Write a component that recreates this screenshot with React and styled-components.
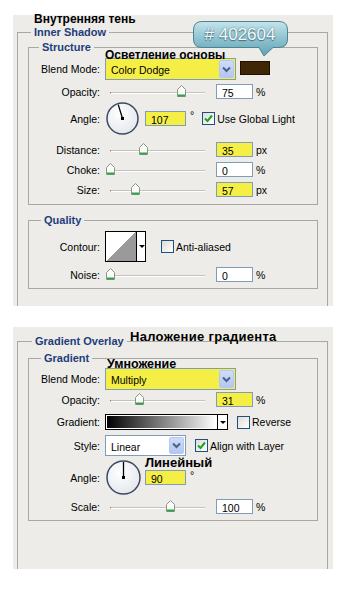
import React from "react"
import styled, { createGlobalStyle, css } from "styled-components"

const GlobalStyle = createGlobalStyle`
  body {
    margin: 0;
    background: #fff;
    font-family: "Liberation Sans", Arial, sans-serif;
  }
`

const YELLOW = "#f5ef45"

const Page = styled.div`
  padding: 15px 0 0 13px;
`

const Panel = styled.div`
  display: flow-root;
  position: relative;
  width: 320px;
  height: ${(p) => p.$h}px;
  margin-top: ${(p) => p.$mt || 0}px;
  background: #edece8;
`

/* outer group runs past the bottom of the cropped panel, so it has no bottom edge */
const OuterSet = styled.fieldset`
  box-sizing: border-box;
  width: 311px;
  height: ${(p) => p.$h}px;
  margin: ${(p) => p.$mt}px 0 0 4px;
  padding: ${(p) => p.$pt}px 9px 0 10px;
  border: 1px solid #a9a8a2;
  border-bottom: none;
`

const InnerSet = styled.fieldset`
  box-sizing: border-box;
  width: 290px;
  margin: ${(p) => p.$mt || 0}px 0 0 0;
  padding: ${(p) => p.$pt}px 0 ${(p) => p.$pb}px 0;
  border: 1px solid #a9a8a2;
`

const Legend = styled.legend`
  font: bold 11px/${(p) => p.$lh || 13}px "Liberation Sans", Arial, sans-serif;
  color: #1e3d7b;
  padding: 0 3px;
  margin-left: ${(p) => p.$ml}px;
`

const Row = styled.div`
  display: flex;
  align-items: center;
  height: ${(p) => p.$h}px;
  margin-top: ${(p) => p.$mt || 0}px;
`

const Label = styled.div`
  width: 71px;
  flex: none;
  text-align: right;
  font-size: 10.5px;
  color: #000;
  margin-right: 5px;
`

const Unit = styled.span`
  font-size: 10.5px;
  color: #000;
  margin-left: ${(p) => p.$ml || 3}px;
  ${(p) =>
    p.$top &&
    css`
      align-self: flex-start;
      margin-top: ${p.$top}px;
    `}
`

const Field = styled.div`
  box-sizing: border-box;
  width: ${(p) => p.$w || 37}px;
  height: 15px;
  border: 1px solid #7f9db9;
  background: ${(p) => (p.$hl ? YELLOW : "#fff")};
  font-size: 10.5px;
  line-height: 14px;
  padding: 1px 0 0 5px;
  margin-left: ${(p) => p.$ml || 0}px;
`

const Select = styled.div`
  box-sizing: border-box;
  display: flex;
  align-items: center;
  width: ${(p) => p.$w}px;
  height: ${(p) => p.$h}px;
  border: 1px solid #7f9db9;
  background: ${(p) => (p.$hl ? YELLOW : "#fff")};
  padding: 1px;
  font-size: 10.5px;
`

const SelectText = styled.span`
  flex: 1;
  padding-left: 4px;
  padding-top: 2px;
`

const DropButton = styled.div`
  width: 15px;
  align-self: stretch;
  border-radius: 2px;
  background: linear-gradient(#cfdcfb, #b3c6f2);
  border: 1px solid #b7c8ee;
  box-sizing: border-box;
  display: flex;
  align-items: center;
  justify-content: center;
`

const Swatch = styled.div`
  width: 30px;
  height: 14px;
  box-sizing: border-box;
  margin-left: 4px;
  margin-top: -2px;
  background: #402604;
  border: 1px solid #1b1002;
`

const SliderBox = styled.div`
  position: relative;
  width: 111px;
  height: 15px;
  flex: none;
`

const Track = styled.div`
  position: absolute;
  left: 5px;
  right: 11px;
  top: 8px;
  height: 1px;
  background: #c4c3bd;
  border-bottom: 1px solid #fff;
  border-left: 1px solid #888;
`

const Thumb = styled.svg`
  position: absolute;
  top: 1px;
  left: ${(p) => p.$x - 4.5}px;
`

const CheckBox = styled.div`
  box-sizing: border-box;
  width: 13px;
  height: 13px;
  flex: none;
  border: 1px solid #1c5180;
  background: linear-gradient(135deg, #dedcd4, #fff);
  margin-left: ${(p) => p.$ml}px;
  display: flex;
  align-items: center;
  justify-content: center;
`

const CheckText = styled.span`
  font-size: 10.5px;
  margin-left: 2px;
  white-space: nowrap;
`

const Dial = styled.svg`
  flex: none;
  margin-right: ${(p) => p.$mr}px;
`

const GradientBar = styled.div`
  box-sizing: border-box;
  display: flex;
  width: 123px;
  height: 16px;
  border: 1px solid #000;
  background: #fff;
`

const GradientFill = styled.div`
  flex: 1;
  margin: 1px;
  background: linear-gradient(to right, #000, #fff);
`

const MiniArrow = styled.div`
  width: 10px;
  flex: none;
  border-left: 1px solid #000;
  display: flex;
  justify-content: center;
  align-items: center;
  box-sizing: border-box;
  &::after {
    content: "";
    border-left: 3px solid transparent;
    border-right: 3px solid transparent;
    border-top: 3px solid #000;
  }
`

const ContourBox = styled.div`
  box-sizing: border-box;
  display: flex;
  width: 41px;
  height: 31px;
  border: 1px solid #000;
  background: #fff;
`

const ContourCurve = styled.div`
  width: 30px;
  flex: none;
  background: linear-gradient(to bottom right, #fff 50%, #9a9a9a 50%);
`

const Note = styled.div`
  position: absolute;
  left: ${(p) => p.$x}px;
  top: ${(p) => p.$y}px;
  font: bold ${(p) => p.$fs || 12}px / ${(p) => p.$lh || 12}px "Liberation Sans", Arial,
    sans-serif;
  letter-spacing: ${(p) => p.$ls || 0}px;
  color: #000;
  white-space: nowrap;
`

const Callout = styled.div`
  position: absolute;
  left: 180px;
  top: 6px;
  width: 96px;
  height: 36px;
`

const CalloutText = styled.div`
  position: absolute;
  left: 0;
  top: 4px;
  width: 94px;
  text-align: center;
  font: 17px/20px "Liberation Sans", Arial, sans-serif;
  color: #f4f8f9;
  text-shadow: 0 1px 1px #3f7080, 0 0 2px #4d8292;
`

const Chevron = () => (
  <svg width="9" height="7" viewBox="0 0 9 7">
    <path d="M1 1.5 L4.5 5 L8 1.5" fill="none" stroke="#4d6185" strokeWidth="2" />
  </svg>
)

const Check = ({ on }) =>
  on ? (
    <svg width="9" height="9" viewBox="0 0 9 9">
      <path d="M1 4.5 L3.5 7 L8 1.5" fill="none" stroke="#21a121" strokeWidth="2" />
    </svg>
  ) : null

const Slider = ({ x }) => (
  <SliderBox>
    <Track />
    <Thumb $x={x} width="9" height="12" viewBox="0 0 9 12">
      <path d="M0.5 4.5 L4.5 0.5 L8.5 4.5 V11.5 H0.5 Z" fill="#fbfbf8" stroke="#8a9488" />
      <rect x="1" y="9.5" width="7" height="2" fill="#2fa34a" />
    </Thumb>
  </SliderBox>
)

const AngleDial = ({ deg, size, mr }) => {
  const c = size / 2
  const r = c - 2
  const a = (deg * Math.PI) / 180
  return (
    <Dial $mr={mr} width={size} height={size} viewBox={`0 0 ${size} ${size}`}>
      <defs>
        <radialGradient id={`dg${deg}`} cx="40%" cy="35%" r="70%">
          <stop offset="0" stopColor="#ffffff" />
          <stop offset="1" stopColor="#e4e6ec" />
        </radialGradient>
      </defs>
      <circle cx={c} cy={c} r={r} fill={`url(#dg${deg})`} stroke="#3c4a63" strokeWidth="1.5" />
      <line
        x1={c}
        y1={c}
        x2={c + Math.cos(a) * (r - 1)}
        y2={c - Math.sin(a) * (r - 1)}
        stroke="#000"
        strokeWidth="1.3"
      />
      <rect x={c - 1.5} y={c - 1.5} width="3" height="3" fill="#000" />
    </Dial>
  )
}

const SliderRow = ({ label, x, value, hl, unit, mt }) => (
  <Row $h={15} $mt={mt}>
    <Label>{label}</Label>
    <Slider x={x} />
    <Field $hl={hl}>{value}</Field>
    <Unit>{unit}</Unit>
  </Row>
)

const structureRows = [
  { label: "Distance:", x: 38, value: "35", hl: true, unit: "px", mt: 6 },
  { label: "Choke:", x: 5, value: "0", hl: false, unit: "%", mt: 5 },
  { label: "Size:", x: 30, value: "57", hl: true, unit: "px", mt: 5 },
]

const CalloutShape = () => (
  <svg width="96" height="36" viewBox="0 0 96 36">
    <defs>
      <linearGradient id="cg" x1="0" y1="0" x2="0" y2="1">
        <stop offset="0" stopColor="#c6e4eb" />
        <stop offset="0.5" stopColor="#8fc2cf" />
        <stop offset="1" stopColor="#64a2b4" />
      </linearGradient>
    </defs>
    <path
      d="M9 0.5 H86 Q94.5 0.5 94.5 9 V18 Q94.5 26.5 86 26.5 H80 L71 35 L66 26.5 H9 Q0.5 26.5 0.5 18 V9 Q0.5 0.5 9 0.5 Z"
      fill="url(#cg)"
      stroke="#4a8597"
    />
  </svg>
)

export default function App() {
  return (
    <>
      <GlobalStyle />
      <Page>
        <Panel $h={291}>
          <OuterSet $mt={12} $pt={3} $h={279}>
            <Legend $ml={3} $lh={11}>
              Inner Shadow
            </Legend>
            <InnerSet $pt={4} $pb={7}>
              <Legend $ml={10}>Structure</Legend>
              <Row $h={22}>
                <Label>Blend Mode:</Label>
                <Select $w={131} $h={22} $hl>
                  <SelectText>Color Dodge</SelectText>
                  <DropButton>
                    <Chevron />
                  </DropButton>
                </Select>
                <Swatch />
              </Row>
              <SliderRow label="Opacity:" x={76} value="75" hl={false} unit="%" mt={4} />
              <Row $h={35} $mt={2}>
                <Label>Angle:</Label>
                <AngleDial deg={107} size={35} mr={5} />
                <Field $w={41} $hl>
                  107
                </Field>
                <Unit $ml={4} $top={8}>°</Unit>
                <CheckBox $ml={8}>
                  <Check on />
                </CheckBox>
                <CheckText>Use Global Light</CheckText>
              </Row>
              {structureRows.map((r) => (
                <SliderRow key={r.label} {...r} />
              ))}
            </InnerSet>
            <InnerSet $mt={9} $pt={4} $pb={6}>
              <Legend $ml={12}>Quality</Legend>
              <Row $h={31}>
                <Label>Contour:</Label>
                <ContourBox>
                  <ContourCurve />
                  <MiniArrow />
                </ContourBox>
                <CheckBox $ml={15} />
                <CheckText>Anti-aliased</CheckText>
              </Row>
              <SliderRow label="Noise:" x={5} value="0" hl={false} unit="%" mt={5} />
            </InnerSet>
          </OuterSet>
          <Note $x={21} $y={-1} $fs={12} $lh={10}>
            Внутренняя тень
          </Note>
          <Note $x={92} $y={34} $fs={12}>
            Осветление основы
          </Note>
          <Callout>
            <CalloutShape />
            <CalloutText># 402604</CalloutText>
          </Callout>
        </Panel>

        <Panel $h={242} $mt={21}>
          <OuterSet $mt={8} $pt={4} $h={234}>
            <Legend $ml={4}>Gradient Overlay</Legend>
            <InnerSet $pt={3} $pb={6}>
              <Legend $ml={12}>Gradient</Legend>
              <Row $h={22}>
                <Label>Blend Mode:</Label>
                <Select $w={131} $h={22} $hl>
                  <SelectText>Multiply</SelectText>
                  <DropButton>
                    <Chevron />
                  </DropButton>
                </Select>
              </Row>
              <SliderRow label="Opacity:" x={34} value="31" hl unit="%" mt={2} />
              <Row $h={16} $mt={7}>
                <Label>Gradient:</Label>
                <GradientBar>
                  <GradientFill />
                  <MiniArrow />
                </GradientBar>
                <CheckBox $ml={9} />
                <CheckText>Reverse</CheckText>
              </Row>
              <Row $h={21} $mt={5}>
                <Label>Style:</Label>
                <Select $w={81} $h={21}>
                  <SelectText>Linear</SelectText>
                  <DropButton>
                    <Chevron />
                  </DropButton>
                </Select>
                <CheckBox $ml={9}>
                  <Check on />
                </CheckBox>
                <CheckText>Align with Layer</CheckText>
              </Row>
              <Row $h={37} $mt={3}>
                <Label>Angle:</Label>
                <AngleDial deg={90} size={37} mr={3} />
                <Field $w={41} $hl>
                  90
                </Field>
                <Unit $ml={4} $top={10}>°</Unit>
              </Row>
              <SliderRow label="Scale:" x={65} value="100" hl={false} unit="%" mt={3} />
            </InnerSet>
          </OuterSet>
          <Note $x={117} $y={4} $fs={13} $ls={0.3}>
            Наложение градиента
          </Note>
          <Note $x={94} $y={31} $fs={12.5}>
            Умножение
          </Note>
          <Note $x={132} $y={130} $fs={13}>
            Линейный
          </Note>
        </Panel>
      </Page>
    </>
  )
}
